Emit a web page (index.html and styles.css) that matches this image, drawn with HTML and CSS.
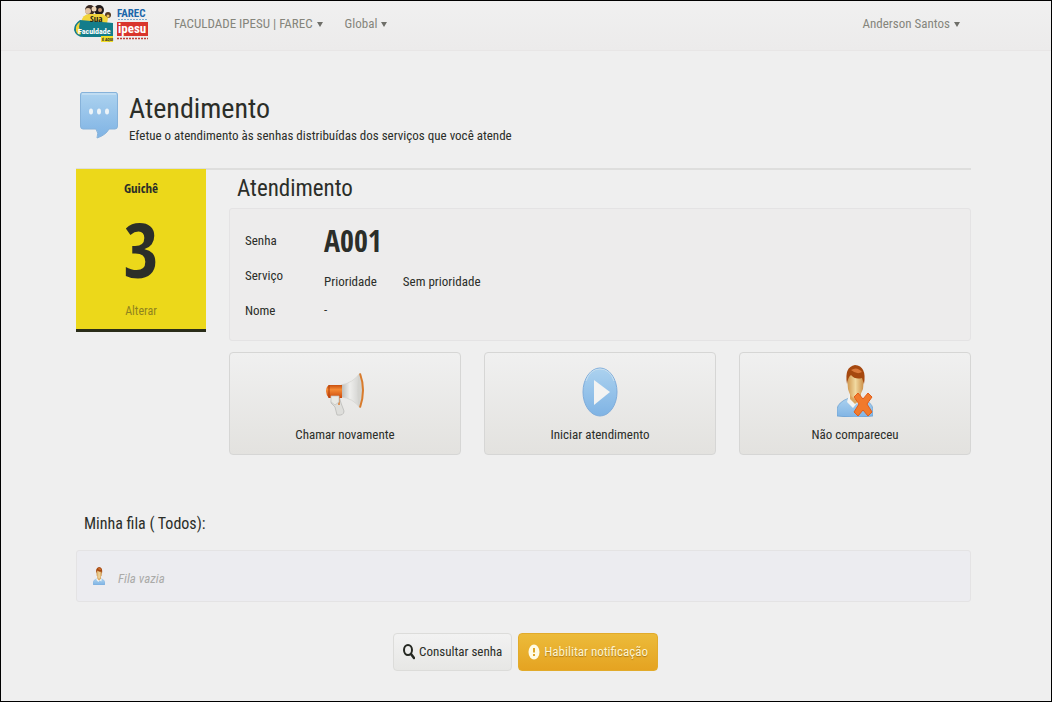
FILE: index.html
```html
<!DOCTYPE html>
<html lang="pt-BR">
<head>
<meta charset="utf-8">
<title>Atendimento</title>
<link rel="stylesheet" href="styles.css">
</head>
<body>
<svg width="0" height="0" class="defs" aria-hidden="true">
  <defs>
    <linearGradient id="blue" x1="0" y1="0" x2="0" y2="1"><stop offset="0" stop-color="#acd2ef"/><stop offset="1" stop-color="#7fb3e4"/></linearGradient>
    <linearGradient id="orange" x1="0" y1="0" x2="0" y2="1"><stop offset="0" stop-color="#c9500f"/><stop offset=".35" stop-color="#f58a34"/><stop offset="1" stop-color="#cc4a0c"/></linearGradient>
    <linearGradient id="horn" x1="0" y1="0" x2="1" y2="0"><stop offset="0" stop-color="#b9b9b6"/><stop offset=".4" stop-color="#eeeeec"/><stop offset="1" stop-color="#c9c9c6"/></linearGradient>
    <linearGradient id="skin" x1="0" y1="0" x2="1" y2="0"><stop offset="0" stop-color="#cf954b"/><stop offset=".5" stop-color="#f1d9a0"/><stop offset="1" stop-color="#c98b43"/></linearGradient>
    <symbol id="person" viewBox="0 0 36 52" preserveAspectRatio="none">
      <path d="M0 51V44Q1 37 12 33L24 33Q35 37 36 44V51Q18 54 0 51Z" fill="url(#blue)" stroke="#6c9fcf" stroke-width=".7"/>
      <path d="M12 30L10 37 16 43 20 38 25 42 26 34Z" fill="#f4f4f2"/>
      <path d="M13 28V34L18 39 24 34V28Z" fill="#d9a660"/>
      <path d="M10 12Q10 3 18 3Q27 3 27 12L26 24Q22 34 18 34Q13 32 11 24Z" fill="url(#skin)"/>
      <path d="M10 19Q7 2 18 0Q30 1 27 19L25 13Q18 15 14 10Q11 12 10 19Z" fill="#a5480f"/>
      <path d="M14 5Q20 1 25 7Q20 10 14 5Z" fill="#d9793a"/>
    </symbol>
  </defs>
</svg>
<header class="navbar">
  <a href="#" class="brand" aria-label="Sua Faculdade é Aqui, FAREC IPESU">
    <svg width="77" height="38" viewBox="0 0 77 38">
      <circle cx="16" cy="5" r="5" fill="#3a2922"/><circle cx="25" cy="5" r="5" fill="#211b1b"/><circle cx="34" cy="10" r="3" fill="#543921"/>
      <circle cx="14" cy="6" r="3" fill="#e3c3a2"/><circle cx="20" cy="4" r="2.500" fill="#f0d9bb"/><circle cx="26" cy="5" r="2" fill="#c89773"/><circle cx="34" cy="11" r="1.500" fill="#e7bd5d"/>
      <path d="M7 18Q8 9 16 9H29L34 13 33 19Z" fill="#f2d43a"/>
      <path d="M6 15Q0 19 0 25Q2 33 12 32H39V18Z" fill="#147d8b"/>
      <path d="M6 17Q1 20 2 26Q4 31 7 29L5 22Z" fill="#f2d43a"/>
      <rect x="27" y="31" width="12" height="6" fill="#f0de28"/>
      <text x="16" y="17" class="logo-sua">Sua</text><text x="4" y="29" class="logo-fac">Faculdade</text><text x="28" y="36" class="logo-aqui">É AQUI</text>
      <text x="43" y="12" class="logo-farec">FAREC</text>
      <path d="M44 14.500H73" stroke="#79a8ce" stroke-width="1" stroke-dasharray="2 1"/>
      <rect x="43" y="17" width="31" height="14" fill="#d9352c"/><text x="44" y="28" class="logo-ipesu">ipesu</text>
      <path d="M43 33.500H74" stroke="#bd4038" stroke-width="1.500" stroke-dasharray="2 1"/>
    </svg>
  </a>
  <nav class="nav">
    <a href="#">FACULDADE IPESU | FAREC <span class="caret"></span></a>
    <a href="#">Global <span class="caret"></span></a>
  </nav>
  <a href="#" class="user">Anderson Santos <span class="caret"></span></a>
</header>
<main class="container">
  <div class="page-header">
    <svg width="38" height="48" viewBox="0 0 38 48" aria-hidden="true">
      <path d="M2 .5H36Q37.500 .5 37.500 3V34Q37.500 37 35 37H29Q26 43 17 46Q19 41 16 37H3Q.5 37 .5 34V3Q.5 .5 2 .5Z" fill="url(#blue)" stroke="#86b2da"/>
      <path d="M2 2H36" stroke="#d5e8f5"/>
      <ellipse cx="11" cy="19.500" rx="2" ry="3" fill="#edf4f8"/><ellipse cx="19" cy="19.500" rx="2" ry="3" fill="#edf4f8"/><ellipse cx="27" cy="19.500" rx="2" ry="3" fill="#edf4f8"/>
    </svg>
    <div>
      <h1>Atendimento</h1>
      <p>Efetue o atendimento às senhas distribuídas dos serviços que você atende</p>
    </div>
  </div>
  <div class="layout">
    <aside class="desk">
      <h2>Guichê</h2>
      <span class="desk-number">3</span>
      <a href="#">Alterar</a>
    </aside>
    <section class="service">
      <h2>Atendimento</h2>
      <div class="well ticket">
        <div class="labels"><span>Senha</span><span>Serviço</span><span>Nome</span></div>
        <div class="values">
          <strong>A001</strong>
          <div class="priority"><span>Prioridade</span><span>Sem prioridade</span></div>
          <span>-</span>
        </div>
      </div>
      <div class="actions">
        <button type="button" class="action">
          <svg width="42" height="52" viewBox="0 0 42 52" aria-hidden="true">
            <path d="M8 31L15 31 17 38 20 46Q20 51 13 50L11 42 7 38Z" fill="#dededb" stroke="#b5b5b1" stroke-width=".7"/>
            <path d="M15 32V40" stroke="#d97b30" stroke-width="1.500"/>
            <path d="M17 20Q29 18 36 8Q42 25 36 43Q29 33 17 32Z" fill="url(#horn)" stroke="#d2d2cf" stroke-width=".7"/>
            <ellipse cx="36" cy="25.500" rx="2.500" ry="17" fill="#d3d3cf"/>
            <path d="M36 8.500Q42 25 36 42.500" fill="none" stroke="#d97b2c" stroke-width="2"/>
            <path d="M5 20H18V33H5Q2 30 2 26Q2 22 5 20Z" fill="url(#orange)"/>
            <path d="M5 20V33" stroke="#ac3b0a"/>
            <path d="M7 31H15V37L11 40 7 37Z" fill="#e9e9e5" stroke="#c0c0bb" stroke-width=".7"/>
          </svg>
          <span>Chamar novamente</span>
        </button>
        <button type="button" class="action">
          <svg width="36" height="52" viewBox="0 0 36 52" aria-hidden="true">
            <ellipse cx="18" cy="27" rx="17" ry="24" fill="url(#blue)" stroke="#80addb"/>
            <path d="M4 16Q8 4 18 4T32 16" fill="none" stroke="#c9e0ef" stroke-width="1"/>
            <path d="M12 15L28 27 12 40Z" fill="#f3f3f2"/>
          </svg>
          <span>Iniciar atendimento</span>
        </button>
        <button type="button" class="action">
          <svg width="36" height="52" viewBox="0 0 36 52" aria-hidden="true">
            <use href="#person" width="36" height="52"/>
            <path d="M17 32L21 28 26 34 31 28 35 32 30 39 35 47 31 51 26 45 21 51 17 47 22 39Z" fill="#f17a2c" stroke="#e25c18"/>
          </svg>
          <span>Não compareceu</span>
        </button>
      </div>
    </section>
  </div>
  <section class="queue">
    <h3>Minha fila ( Todos):</h3>
    <div class="well queue-list">
      <svg width="12" height="18" viewBox="0 0 36 52" preserveAspectRatio="none" aria-hidden="true"><use href="#person" width="36" height="52"/></svg>
      <em>Fila vazia</em>
    </div>
  </section>
  <div class="footer-actions">
    <button type="button" class="btn">
      <svg width="12" height="16" viewBox="0 0 12 16" aria-hidden="true"><ellipse cx="5" cy="6" rx="4" ry="5" fill="none" stroke="#252822" stroke-width="2"/><path d="M8 10L11 14" stroke="#252822" stroke-width="2.500" stroke-linecap="round"/></svg>
      Consultar senha
    </button>
    <button type="button" class="btn btn-warning">
      <svg width="12" height="16" viewBox="0 0 12 16" aria-hidden="true"><ellipse cx="6" cy="8" rx="5.500" ry="7.500" fill="#fffbe5"/><path d="M6 4V8.500M6 10V12" stroke="#dfa727" stroke-width="2"/></svg>
      Habilitar notificação
    </button>
  </div>
</main>
</body>
</html>
```
FILE: styles.css
```css
* { box-sizing: border-box; }
body {
  margin: 0;
  min-height: 100vh;
  border: 1px solid #000;
  background: #efefef;
  color: #2b2e29;
  font: 13px/20px "Roboto Condensed", "Liberation Sans", sans-serif;
}
h1, h2, h3, p { margin: 0; font-weight: normal; }
a { color: inherit; text-decoration: none; }
button { font: inherit; color: inherit; cursor: pointer; }
svg { display: block; flex: none; }
.defs { position: absolute; }

.navbar {
  display: flex;
  align-items: center;
  height: 50px;
  padding: 0 91px 4px 73px;
  border-bottom: 1px solid #e8e6e6;
  background: linear-gradient(#f0f0f0, #ecebeb);
  color: #85857c;
}
.nav { display: flex; gap: 22px; margin-left: 23px; }
.user { margin-left: auto; }
.caret {
  display: inline-block;
  margin-left: 1px;
  border: 3px solid transparent;
  border-top: 5px solid #6f6f69;
  border-bottom: 0;
  vertical-align: 1px;
}
.logo-sua { font: bold 9px "Open Sans Condensed", sans-serif; fill: #222118; }
.logo-fac { font: bold 8px "Roboto Condensed", sans-serif; fill: #fff; }
.logo-aqui { font: bold 4px "Roboto Condensed", sans-serif; fill: #222; }
.logo-farec { font: bold 11px "Roboto Condensed", sans-serif; fill: #1b66aa; }
.logo-ipesu { font: bold 13px "Roboto Condensed", sans-serif; fill: #fff; }

.container { padding: 41px 80px 30px 75px; }
.page-header {
  display: flex;
  gap: 11px;
  height: 78px;
  padding-left: 4px;
  border-bottom: 2px solid #dededd;
}
.page-header h1 { font-size: 28px; line-height: 34px; }

.layout { display: flex; align-items: flex-start; gap: 23px; }
.desk {
  display: flex;
  flex-direction: column;
  align-items: center;
  flex: 0 0 130px;
  height: 163px;
  margin-top: -1px;
  padding-top: 9px;
  border-bottom: 3px solid #2a2d19;
  background: #ecd81a;
}
.desk h2, .desk-number, .values strong { font-family: "Open Sans Condensed", "Roboto Condensed", sans-serif; font-weight: bold; }
.desk h2 { font-size: 13px; }
.desk-number { margin: 11px 0 12px; font-size: 76px; line-height: 80px; }
.desk a { font-size: 12px; color: #8f831f; }

.service { flex: 1; }
.service h2 { padding: 4px 8px; font-size: 23px; line-height: 30px; }
.well { border: 1px solid #e4e3e4; border-radius: 3px; background: #edecec; }
.ticket { display: flex; height: 133px; padding: 14px 15px; }
.labels { display: flex; flex-direction: column; width: 79px; line-height: 35px; }
.values { line-height: 22px; }
.values strong { display: block; margin-bottom: 12px; font-size: 30px; line-height: 36px; }
.priority { display: flex; gap: 26px; margin-bottom: 6px; }
.actions { display: grid; grid-template-columns: repeat(3, 1fr); gap: 23px; margin-top: 11px; }
.action {
  display: flex;
  flex-direction: column;
  align-items: center;
  gap: 8px;
  height: 103px;
  padding: 12px 8px;
  border: 1px solid #d6d6d5;
  border-radius: 4px;
  background: linear-gradient(#f0f0f0, #e3e2df);
}

.queue { margin-top: 56px; }
.queue h3 { padding: 0 8px; font-size: 16px; line-height: 26px; }
.queue-list {
  display: flex;
  align-items: center;
  gap: 13px;
  height: 52px;
  margin-top: 13px;
  padding: 0 16px;
  background: #ececf0;
}
.queue-list em { padding-top: 5px; color: #aaaaa8; }

.footer-actions { display: flex; justify-content: center; gap: 6px; margin-top: 31px; padding-left: 4px; }
.btn {
  display: flex;
  align-items: center;
  gap: 4px;
  height: 38px;
  padding: 0 9px;
  border: 1px solid #dcdcda;
  border-radius: 4px;
  background: linear-gradient(#f2f2f2, #e7e7e5);
}
.btn-warning {
  border-color: #e2ab2b;
  background: linear-gradient(#ecbb3a, #e5a321);
  color: #fff5cf;
  text-shadow: 0 1px 1px #a9781a;
}
```
